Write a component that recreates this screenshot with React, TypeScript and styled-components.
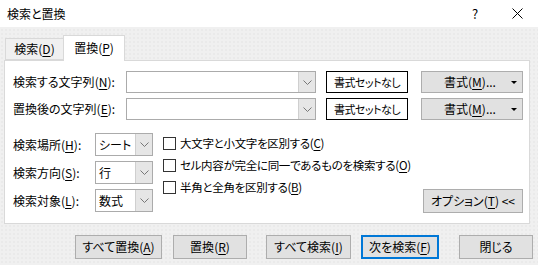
import styled, { createGlobalStyle } from "styled-components";

const GlobalStyle = createGlobalStyle`
  html, body {
    margin: 0;
    padding: 0;
  }
  body {
    width: 538px;
    height: 265px;
    overflow: hidden;
    font-family: "Noto Sans CJK JP", "Liberation Sans", sans-serif;
    font-size: 12px;
    font-feature-settings: "palt";
    color: #000;
    background-color: #f0f0f0;
    background-image: radial-gradient(circle, #e2e2e2 0.6px, transparent 0.8px);
    background-size: 4px 4px;
  }
  u {
    text-decoration-thickness: 1px;
    text-underline-offset: 2px;
  }
`;

const Dialog = styled.div`
  width: 538px;
  height: 265px;
  display: flex;
  flex-direction: column;
`;

const TitleBar = styled.div`
  height: 27px;
  background: #fff;
  display: flex;
  align-items: center;
  padding-left: 7px;
  font-size: 12px;
  line-height: 16px;
`;

const TitleText = styled.span`
  flex: 1;
`;

const TitleButton = styled.div`
  width: 42px;
  height: 27px;
  display: flex;
  align-items: center;
  justify-content: center;
  font-size: 13px;
`;

const TabBar = styled.div`
  height: 33px;
  display: flex;
  align-items: flex-end;
  padding-left: 5px;
  position: relative;
  z-index: 1;
`;

const Tab = styled.div<{ $active?: boolean }>`
  width: ${(p) => (p.$active ? "62px" : "58px")};
  height: ${(p) => (p.$active ? "26px" : "22px")};
  margin-bottom: ${(p) => (p.$active ? "-1px" : "0")};
  display: flex;
  align-items: center;
  justify-content: center;
  box-sizing: border-box;
  border: 1px solid #d9d9d9;
  border-bottom: ${(p) => (p.$active ? "none" : "1px solid #d9d9d9")};
  border-right: ${(p) => (p.$active ? "1px solid #d9d9d9" : "none")};
  background: ${(p) => (p.$active ? "#fff" : "#f0f0f0")};
  line-height: 16px;
  padding-bottom: ${(p) => (p.$active ? "2px" : "0")};
`;

const Panel = styled.div`
  margin: 0 8px 0 4px;
  height: 164px;
  box-sizing: border-box;
  border: 1px solid #d9d9d9;
  background: #fff;
  padding: 10px 6px 0 8px;
  display: flex;
  flex-direction: column;
`;

const FieldRow = styled.div`
  display: flex;
  align-items: center;
  height: 22px;
  margin-bottom: 5px;
`;

const Label = styled.label<{ $w: number }>`
  width: ${(p) => p.$w}px;
  line-height: 16px;
  white-space: nowrap;
`;

const Combo = styled.div<{ $w: number; $h: number }>`
  width: ${(p) => p.$w}px;
  height: ${(p) => p.$h}px;
  box-sizing: border-box;
  border: 1px solid #ababab;
  background: #fff;
  display: flex;
`;

const ComboText = styled.div`
  flex: 1;
  padding-left: 3px;
  display: flex;
  align-items: center;
  line-height: 16px;
`;

const ComboArrow = styled.div`
  width: 16px;
  background: #e6e6e6;
  border-left: 1px solid #cfcfcf;
  display: flex;
  align-items: center;
  justify-content: center;
`;

const Button = styled.div<{ $w: number; $h?: number; $ml?: number; $plain?: boolean; $focus?: boolean }>`
  width: ${(p) => p.$w}px;
  height: ${(p) => p.$h ?? 24}px;
  margin-left: ${(p) => p.$ml ?? 0}px;
  box-sizing: border-box;
  border: ${(p) => (p.$focus ? "2px solid #0078d7" : p.$plain ? "1px solid #000" : "1px solid #adadad")};
  background: ${(p) => (p.$plain ? "#fff" : "#e1e1e1")};
  display: flex;
  align-items: center;
  justify-content: center;
  line-height: 16px;
  white-space: nowrap;
  position: relative;
  flex-shrink: 0;
  font-size: ${(p) => (p.$plain ? "11px" : "12px")};
  letter-spacing: ${(p) => (p.$plain ? "-0.5px" : "normal")};
`;

const MenuCaret = styled.span`
  position: absolute;
  right: 5px;
  top: 9px;
  width: 0;
  height: 0;
  border-left: 3px solid transparent;
  border-right: 3px solid transparent;
  border-top: 3px solid #000;
`;

const Lower = styled.div`
  display: flex;
  margin-top: 8px;
`;

const SelectCol = styled.div`
  display: flex;
  flex-direction: column;
  gap: 5px;
`;

const SelectRow = styled.div`
  display: flex;
  align-items: center;
`;

const CheckCol = styled.div`
  display: flex;
  flex-direction: column;
  margin-left: 10px;
  margin-top: -1px;
`;

const CheckRow = styled.div`
  height: 22px;
  display: flex;
  align-items: center;
  line-height: 16px;
  white-space: nowrap;
  font-size: 11.5px;
  letter-spacing: -0.3px;
`;

const CheckBox = styled.span`
  width: 13px;
  height: 13px;
  box-sizing: border-box;
  border: 1px solid #333;
  background: #fff;
  margin-right: 4px;
  flex-shrink: 0;
`;

const OptionWrap = styled.div`
  margin-left: auto;
  align-self: flex-end;
  margin-bottom: -1px;
`;

const ButtonBar = styled.div`
  display: flex;
  align-items: center;
  margin-top: 11px;
  padding-left: 75px;
`;

const Chevron = () => (
  <svg width="9" height="5" viewBox="0 0 9 5">
    <polyline points="0.5,0.5 4.5,4.5 8.5,0.5" fill="none" stroke="#777" strokeWidth="1" />
  </svg>
);

const CloseIcon = () => (
  <svg width="11" height="11" viewBox="0 0 11 11">
    <path d="M0.5 0.5 L10.5 10.5 M10.5 0.5 L0.5 10.5" stroke="#000" strokeWidth="1" />
  </svg>
);

const fields = [
  { label: "検索する文字列", key: "N" },
  { label: "置換後の文字列", key: "E" },
];

const selects = [
  { label: "検索場所", key: "H", value: "シート", h: 23 },
  { label: "検索方向", key: "S", value: "行", h: 23 },
  { label: "検索対象", key: "L", value: "数式", h: 23 },
];

const checks = [
  { label: "大文字と小文字を区別する", key: "C" },
  { label: "セル内容が完全に同一であるものを検索する", key: "O" },
  { label: "半角と全角を区別する", key: "B" },
];

const actions = [
  { label: "すべて置換", key: "A", w: 87, ml: 0 },
  { label: "置換", key: "R", w: 74, ml: 11 },
  { label: "すべて検索", key: "I", w: 85, ml: 19 },
  { label: "次を検索", key: "F", w: 78, ml: 10, focus: true },
  { label: "閉じる", key: "", w: 74, ml: 20 },
];

export default function App() {
  return (
    <>
      <GlobalStyle />
      <Dialog>
        <TitleBar>
          <TitleText>検索と置換</TitleText>
          <TitleButton>?</TitleButton>
          <TitleButton>
            <CloseIcon />
          </TitleButton>
        </TitleBar>
        <TabBar>
          <Tab>
            検索(<u>D</u>)
          </Tab>
          <Tab $active>
            置換(<u>P</u>)
          </Tab>
        </TabBar>
        <Panel>
          {fields.map((f) => (
            <FieldRow key={f.key}>
              <Label $w={113}>
                {f.label}(<u>{f.key}</u>):
              </Label>
              <Combo $w={190} $h={22}>
                <ComboText />
                <ComboArrow>
                  <Chevron />
                </ComboArrow>
              </Combo>
              <Button $w={82} $h={22} $ml={10} $plain>
                書式セットなし
              </Button>
              <Button $w={102} $h={22} $ml={13}>
                <span style={{ marginRight: 4 }}>
                  書式(<u>M</u>)...
                </span>
                <MenuCaret />
              </Button>
            </FieldRow>
          ))}
          <Lower>
            <SelectCol>
              {selects.map((s) => (
                <SelectRow key={s.key}>
                  <Label $w={82}>
                    {s.label}(<u>{s.key}</u>):
                  </Label>
                  <Combo $w={58} $h={s.h}>
                    <ComboText>{s.value}</ComboText>
                    <ComboArrow>
                      <Chevron />
                    </ComboArrow>
                  </Combo>
                </SelectRow>
              ))}
            </SelectCol>
            <CheckCol>
              {checks.map((c) => (
                <CheckRow key={c.key}>
                  <CheckBox />
                  {c.label}(<u>{c.key}</u>)
                </CheckRow>
              ))}
            </CheckCol>
            <OptionWrap>
              <Button $w={100} $h={24}>
                オプション(<u>T</u>)&nbsp;&lt;&lt;
              </Button>
            </OptionWrap>
          </Lower>
        </Panel>
        <ButtonBar>
          {actions.map((a) => (
            <Button key={a.label} $w={a.w} $ml={a.ml} $focus={a.focus}>
              {a.label}
              {a.key && (
                <>
                  (<u>{a.key}</u>)
                </>
              )}
            </Button>
          ))}
        </ButtonBar>
      </Dialog>
    </>
  );
}
